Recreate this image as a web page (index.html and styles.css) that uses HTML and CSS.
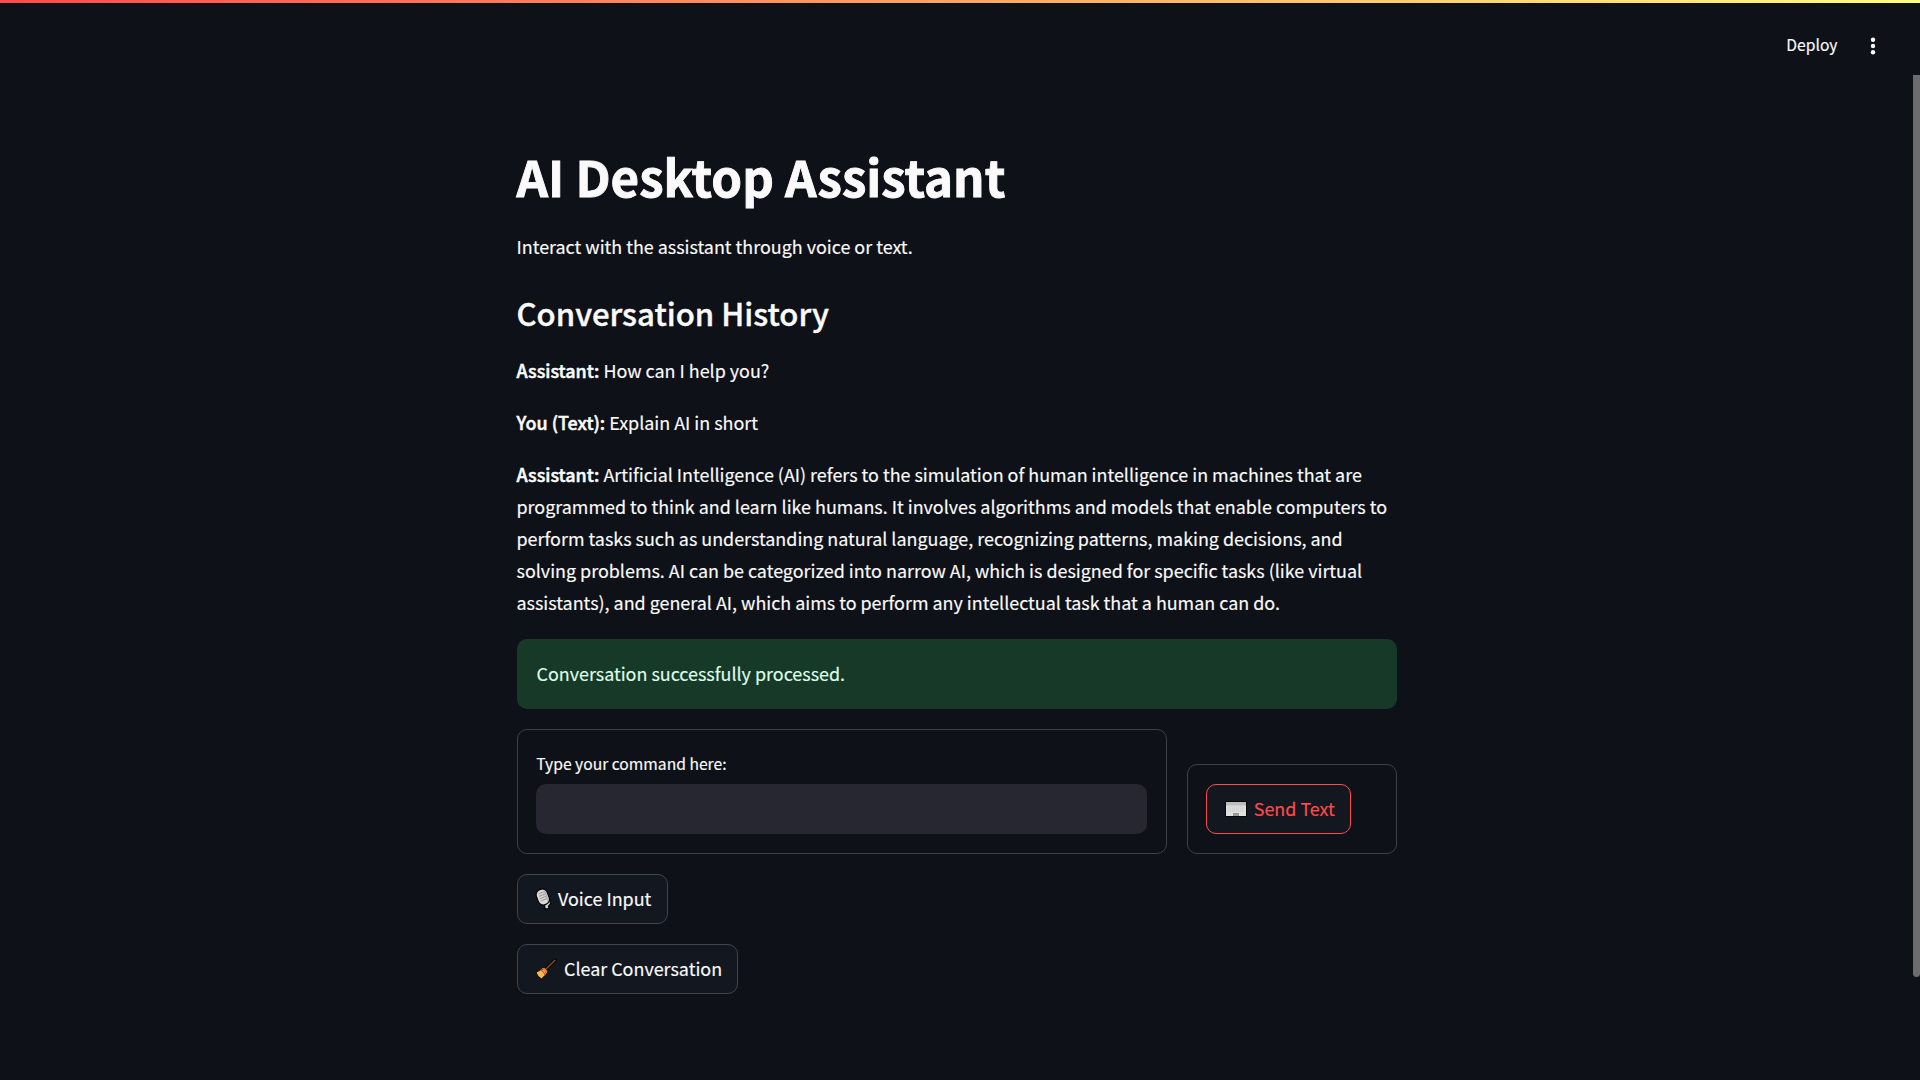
FILE: index.html
```
<!DOCTYPE html>
<html lang="en">
<head>
<meta charset="utf-8">
<title>AI Desktop Assistant</title>
<link rel="stylesheet" href="styles.css">
</head>
<body>
<div class="app">
  <div class="decoration"></div>
  <header class="toolbar">
    <span class="deploy">Deploy</span>
    <svg class="menu" viewBox="0 0 6 18"><circle cx="3" cy="2.7" r="2.2"/><circle cx="3" cy="9" r="2.2"/><circle cx="3" cy="15.3" r="2.2"/></svg>
  </header>
  <div class="scroll-area">
    <main class="content">
      <h1 class="title">AI Desktop Assistant</h1>
      <p class="text intro">Interact with the assistant through voice or text.</p>
      <h2 class="subtitle">Conversation History</h2>
      <div class="history">
        <p class="text"><strong>Assistant:</strong> How can I help you?</p>
        <p class="text"><strong>You (Text):</strong> Explain AI in short</p>
        <p class="text"><strong>Assistant:</strong> Artificial Intelligence (AI) refers to the simulation of human intelligence in machines that are<br>programmed to think and learn like humans. It involves algorithms and models that enable computers to<br>perform tasks such as understanding natural language, recognizing patterns, making decisions, and<br>solving problems. AI can be categorized into narrow AI, which is designed for specific tasks (like virtual<br>assistants), and general AI, which aims to perform any intellectual task that a human can do.</p>
      </div>
      <div class="alert">Conversation successfully processed.</div>
      <div class="forms">
        <form class="form form-text">
          <label class="label" for="command">Type your command here:</label>
          <input class="input" id="command" type="text">
        </form>
        <form class="form form-send">
          <button class="button button-send" type="button">
            <svg class="icon-keyboard" viewBox="0 0 22 16"><rect width="22" height="16" rx="1" fill="#050608"/><rect x="1" y="1" width="20" height="14" fill="#e0e0e0"/><path d="M1 1h20v3.500H1z" fill="#bdbdba"/><path d="M2.500 6h17M2.500 8h17M2.500 10h17" stroke="#c2c2c2" stroke-width=".8" stroke-dasharray="1.400 .7"/><path d="M8 12h6v3H8z" fill="#9a9a9a"/><path d="M17.500 1.700h1M19.500 1.700h1" stroke="#c8a860"/></svg>
            <span>Send Text</span>
          </button>
        </form>
      </div>
      <button class="button button-voice" type="button">
        <svg class="icon-mic" viewBox="0 0 17 22"><path d="M9.500 16l.5 4.800h3.600V18l2-2.500-1-4z" fill="#cfcfcf" stroke="#050505" stroke-width="1.200" stroke-linejoin="round"/><g transform="rotate(-20 7.800 9)"><rect x="2" y="1" width="11.600" height="16" rx="5.300" fill="#d8d8d8" stroke="#050505" stroke-width="1.200"/><path d="M5 4.500h6M4.500 7h6.500M4.500 9.500h6.500M4.500 12h6.500" stroke="#9a9a9a" stroke-width=".9"/><path d="M11.500 4v10" stroke="#a8a8a8" stroke-width="1.200"/></g></svg>
        <span>Voice Input</span>
      </button>
      <button class="button button-clear" type="button">
        <svg class="icon-broom" viewBox="0 0 22 22"><path d="M11 11L20.300 2" stroke="#050505" stroke-width="3.400" stroke-linecap="round"/><path d="M10 12L20.300 2" stroke="#8a4f22" stroke-width="1.500"/><path d="M1 14.500L6.500 11q4 0 5 5L6.500 21Q2.500 19 1 14.500z" fill="#f4b952" stroke="#050505" stroke-linejoin="round"/><path d="M6.500 10.300l3-.3 2.800 3-.4 2.800z" fill="#e2893a"/><path d="M5 12q4 1 5 5.300" fill="none" stroke="#d8552c" stroke-width="1.200"/></svg>
        <span>Clear Conversation</span>
      </button>
    </main>
    <div class="scrollbar"><div class="thumb"></div></div>
  </div>
</div>
</body>
</html>
```
FILE: styles.css
```
* {
  box-sizing: border-box;
}

body {
  margin: 0;
  background: #0e1117;
  color: #fafafa;
  font-family: "Noto Sans CJK SC", "Noto Sans", sans-serif;
  font-size: 17.91px;
  -webkit-text-stroke: 0.15px currentColor;
  overflow: hidden;
}

h1, h2, p {
  margin: 0;
}

.app {
  display: flex;
  flex-direction: column;
  height: 1080px;
}

.decoration {
  height: 3px;
  background: linear-gradient(90deg, #ff4b4b, #fffd80);
}

.toolbar {
  height: 72px;
  padding: 0 44.5px 12px 0;
  display: flex;
  align-items: flex-start;
  justify-content: flex-end;
}

.deploy {
  margin-top: 28px;
  margin-right: 32px;
  font-size: 15.67px;
  line-height: 28px;
}

.menu {
  width: 6px;
  height: 18px;
  margin-top: 33.5px;
  fill: #fafafa;
}

.scroll-area {
  flex: 1;
  display: flex;
}

.content {
  width: 880px;
  margin: 68px auto 0;
  display: flex;
  flex-direction: column;
  align-items: flex-start;
}

.title {
  font-size: 49.23px;
  line-height: 66px;
  font-weight: 700;
  -webkit-text-stroke: 0.9px currentColor;
}

.text {
  line-height: 32px;
  white-space: nowrap;
}

.text strong {
  font-weight: 500;
  -webkit-text-stroke: 0.5px currentColor;
}

.intro {
  margin-top: 21px;
}

.subtitle {
  margin-top: 30px;
  font-size: 31.14px;
  line-height: 42px;
  font-weight: 500;
  -webkit-text-stroke: 0.4px currentColor;
}

.history {
  margin-top: 20px;
  display: flex;
  flex-direction: column;
  gap: 20px;
}

.alert {
  width: 100%;
  height: 70px;
  margin-top: 21px;
  padding: 0 20px;
  border-radius: 10px;
  background: #173928;
  color: #dffde9;
  line-height: 68px;
}

.forms {
  width: 100%;
  margin: 20px 0;
  display: flex;
  align-items: flex-end;
  gap: 20px;
}

.form {
  border: 1px solid #3d4044;
  border-radius: 10px;
  padding: 19px 18.75px;
}

.form-text {
  width: 650px;
  height: 125px;
}

.form-send {
  width: 210px;
  height: 90px;
}

.label {
  display: block;
  height: 35px;
  font-size: 15.67px;
  line-height: 30px;
}

.input {
  display: block;
  width: 100%;
  height: 50px;
  border: 0;
  border-radius: 10px;
  background: #262730;
}

.button {
  height: 50px;
  padding: 0 0 0 17.5px;
  display: flex;
  align-items: center;
  border: 1px solid #41444c;
  border-radius: 10px;
  background: #131720;
  color: #fafafa;
  font: inherit;
  line-height: 32px;
  white-space: nowrap;
}

.button span {
  padding-bottom: 2px;
}

.button-send {
  width: 145px;
  border-color: #ff4b4b;
  color: #ff4b4b;
}

.button-voice {
  width: 151px;
}

.button-clear {
  width: 221px;
  margin-top: 20px;
}

.icon-keyboard {
  width: 22px;
  height: 16px;
  margin-right: 7px;
}

.icon-mic {
  width: 17px;
  height: 22px;
  margin-right: 6px;
}

.icon-broom {
  width: 22px;
  height: 22px;
  margin-right: 7px;
}

.scrollbar {
  width: 7px;
}

.thumb {
  height: 902px;
  border-radius: 0 0 4px 4px;
  background: #6b6c70;
}
```
